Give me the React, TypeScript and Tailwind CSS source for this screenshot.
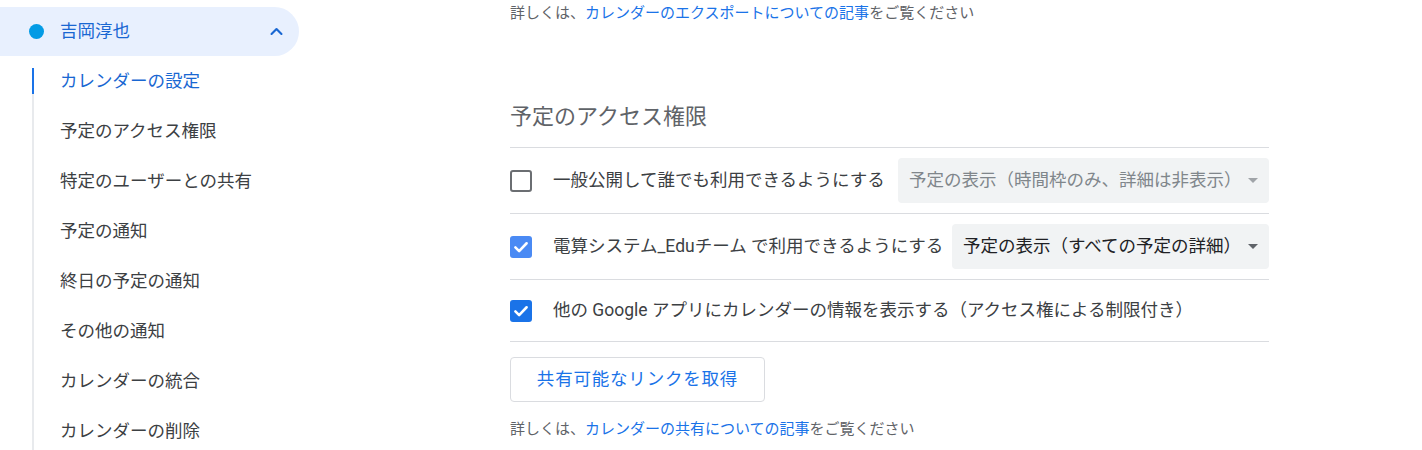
import { ReactNode } from 'react';

const font = { fontFamily: 'Roboto, "Noto Sans CJK JP", "Noto Sans", sans-serif' };

const menuItems = [
  'カレンダーの設定',
  '予定のアクセス権限',
  '特定のユーザーとの共有',
  '予定の通知',
  '終日の予定の通知',
  'その他の通知',
  'カレンダーの統合',
  'カレンダーの削除',
];

function Checkbox({ checked, tone }: { checked: boolean; tone?: string }) {
  if (!checked) {
    return <div className="w-[22px] h-[22px] shrink-0 rounded-[3px] border-[2.5px] border-[#6b6e72]" />;
  }
  return (
    <div className={`w-[22px] h-[22px] shrink-0 rounded-[3px] flex items-center justify-center ${tone}`}>
      <svg width="18" height="18" viewBox="0 0 24 24" fill="none">
        <path d="M4.5 12.5l5 5 10-10.5" stroke="white" strokeWidth="3.4" strokeLinecap="round" strokeLinejoin="round" />
      </svg>
    </div>
  );
}

function Select({ label, disabled, width }: { label: string; disabled?: boolean; width: string }) {
  return (
    <div
      className={`ml-auto h-[45px] ${width} shrink-0 rounded-[4px] bg-[#f1f3f4] flex items-center pl-[11px] pr-[11px] text-[17.5px] whitespace-nowrap overflow-hidden ${
        disabled ? 'text-[#80868b]' : 'text-[#202124]'
      }`}
    >
      <span className="flex-1">{label}</span>
      <svg width="10" height="5" viewBox="0 0 10 5" className="shrink-0">
        <path d="M0 0h10L5 5z" fill={disabled ? '#a0a4a8' : '#5f6368'} />
      </svg>
    </div>
  );
}

function Row({ children, h = 'h-[66px]' }: { children: ReactNode; h?: string }) {
  return <div className={`flex items-center ${h} border-b border-[#dadce0]`}>{children}</div>;
}

function HelpText({ link }: { link: string }) {
  return (
    <p className="text-[15px] leading-[20px] text-[#5f6368] whitespace-nowrap">
      詳しくは、<span className="text-[#1a73e8]">{link}</span>をご覧ください
    </p>
  );
}

export default function App() {
  return (
    <div className="flex bg-white w-[1422px] h-[450px] overflow-hidden" style={font}>
      <aside className="w-[300px] shrink-0">
        <div className="mt-[7px] h-[49px] w-[299px] rounded-r-full bg-[#e8f0fe] flex items-center pl-[29px] pr-[14px]">
          <div className="w-[15px] h-[15px] rounded-full bg-[#039be5]" />
          <span className="ml-[16px] text-[17.5px] text-[#1967d2]">吉岡淳也</span>
          <svg width="17" height="17" viewBox="0 0 24 24" fill="none" className="ml-auto">
            <path d="M5 15.5l7-7 7 7" stroke="#1967d2" strokeWidth="3" strokeLinecap="round" strokeLinejoin="round" />
          </svg>
        </div>
        <nav className="ml-[32px] mt-[12px] border-l-2 border-[#e8eaed] flex flex-col gap-[24px] pb-[20px]">
          {menuItems.map((item, i) => (
            <div
              key={item}
              className={`h-[26px] flex items-center text-[17.5px] whitespace-nowrap ${
                i === 0
                  ? '-ml-[2px] border-l-2 border-[#1a73e8] pl-[26px] text-[#1967d2]'
                  : 'pl-[26px] text-[#3c4043]'
              }`}
            >
              {item}
            </div>
          ))}
        </nav>
      </aside>

      <main className="ml-[210px] w-[759px] shrink-0">
        <div className="pt-[3px]">
          <HelpText link="カレンダーのエクスポートについての記事" />
        </div>

        <h2 className="mt-[80px] pb-[16px] text-[22px] leading-[28px] text-[#5f6368] border-b border-[#dadce0]">
          予定のアクセス権限
        </h2>

        <Row>
          <Checkbox checked={false} />
          <span className="ml-[21px] text-[17.5px] text-[#3c4043] whitespace-nowrap">一般公開して誰でも利用できるようにする</span>
          <Select label="予定の表示（時間枠のみ、詳細は非表示）" disabled width="w-[371px]" />
        </Row>
        <Row>
          <Checkbox checked tone="bg-[#4a8af4]" />
          <span className="ml-[21px] text-[17.5px] text-[#3c4043] whitespace-nowrap">電算システム_Eduチーム で利用できるようにする</span>
          <Select label="予定の表示（すべての予定の詳細）" width="w-[317px]" />
        </Row>
        <Row h="h-[62px]">
          <Checkbox checked tone="bg-[#1a73e8]" />
          <span className="ml-[21px] text-[17.5px] text-[#3c4043] whitespace-nowrap">
            他の Google アプリにカレンダーの情報を表示する（アクセス権による制限付き）
          </span>
        </Row>

        <button className="mt-[15px] h-[45px] w-[255px] rounded-[4px] border border-[#dadce0] text-[17.5px] tracking-[0.8px] text-[#1a73e8] bg-white">
          共有可能なリンクを取得
        </button>

        <div className="mt-[17px]">
          <HelpText link="カレンダーの共有についての記事" />
        </div>
      </main>
    </div>
  );
}
